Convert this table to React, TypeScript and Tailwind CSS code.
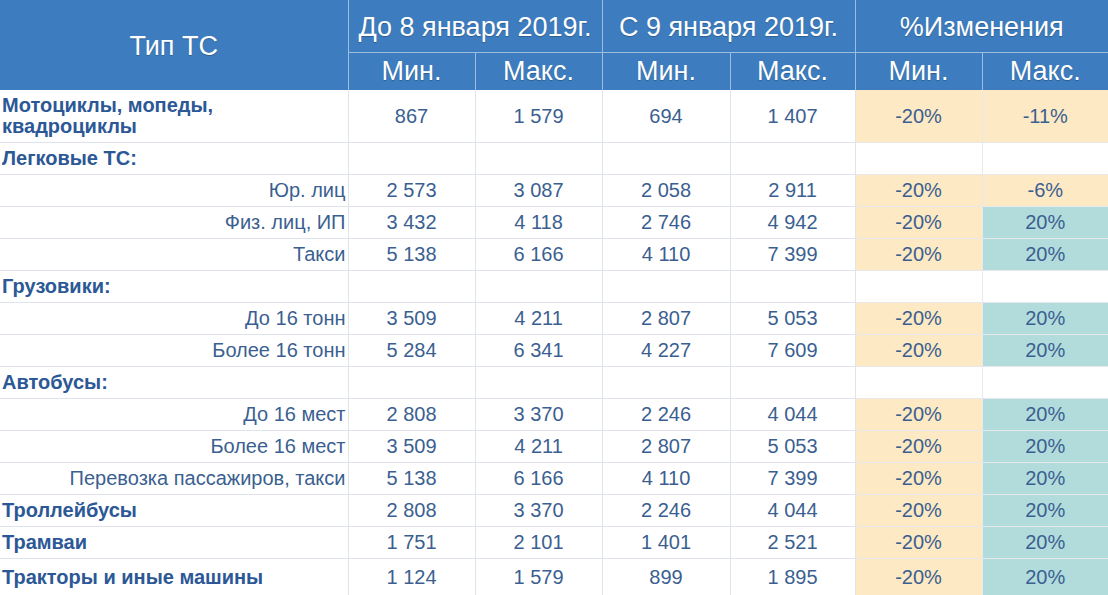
type Row = {
  label: string;
  kind: "main" | "group" | "sub";
  values?: string[];
  minPct?: string;
  maxPct?: string;
  tall?: boolean;
  last?: boolean;
};

const rows: Row[] = [
  { label: "Мотоциклы, мопеды, квадроциклы", kind: "main", values: ["867", "1 579", "694", "1 407"], minPct: "-20%", maxPct: "-11%", tall: true },
  { label: "Легковые ТС:", kind: "group" },
  { label: "Юр. лиц", kind: "sub", values: ["2 573", "3 087", "2 058", "2 911"], minPct: "-20%", maxPct: "-6%" },
  { label: "Физ. лиц, ИП", kind: "sub", values: ["3 432", "4 118", "2 746", "4 942"], minPct: "-20%", maxPct: "20%" },
  { label: "Такси", kind: "sub", values: ["5 138", "6 166", "4 110", "7 399"], minPct: "-20%", maxPct: "20%" },
  { label: "Грузовики:", kind: "group" },
  { label: "До 16 тонн", kind: "sub", values: ["3 509", "4 211", "2 807", "5 053"], minPct: "-20%", maxPct: "20%" },
  { label: "Более 16 тонн", kind: "sub", values: ["5 284", "6 341", "4 227", "7 609"], minPct: "-20%", maxPct: "20%" },
  { label: "Автобусы:", kind: "group" },
  { label: "До 16 мест", kind: "sub", values: ["2 808", "3 370", "2 246", "4 044"], minPct: "-20%", maxPct: "20%" },
  { label: "Более 16 мест", kind: "sub", values: ["3 509", "4 211", "2 807", "5 053"], minPct: "-20%", maxPct: "20%" },
  { label: "Перевозка пассажиров, такси", kind: "sub", values: ["5 138", "6 166", "4 110", "7 399"], minPct: "-20%", maxPct: "20%" },
  { label: "Троллейбусы", kind: "main", values: ["2 808", "3 370", "2 246", "4 044"], minPct: "-20%", maxPct: "20%" },
  { label: "Трамваи", kind: "main", values: ["1 751", "2 101", "1 401", "2 521"], minPct: "-20%", maxPct: "20%" },
  { label: "Тракторы и иные машины", kind: "main", values: ["1 124", "1 579", "899", "1 895"], minPct: "-20%", maxPct: "20%", last: true },
];

function pctBg(v?: string) {
  if (!v) return "bg-white";
  return v.startsWith("-") ? "bg-[#fde9c3]" : "bg-[#b2dcdc]";
}

export default function App() {
  return (
    <div className="w-[1108px] h-[595px] overflow-hidden bg-white font-['Liberation_Sans',Arial,sans-serif]">
      <table className="table-fixed border-collapse w-[1108px]">
        <colgroup>
          <col className="w-[348px]" />
          <col className="w-[127px]" />
          <col className="w-[127px]" />
          <col className="w-[128px]" />
          <col className="w-[125px]" />
          <col className="w-[127px]" />
          <col className="w-[126px]" />
        </colgroup>
        <thead className="bg-[#3d7dbf] text-white text-[27px] leading-[30px] [text-shadow:0_1px_1px_rgba(0,0,0,0.25)]">
          <tr className="h-[52px]">
            <th rowSpan={2} className="font-normal border-r border-[#9dbde0] pt-[2px]">Тип ТС</th>
            <th colSpan={2} className="font-normal border-r border-b border-[#9dbde0] pt-[2px] whitespace-nowrap">До 8 января 2019г.</th>
            <th colSpan={2} className="font-normal border-r border-b border-[#9dbde0] pt-[2px] whitespace-nowrap">С 9 января 2019г.</th>
            <th colSpan={2} className="font-normal border-b border-[#9dbde0] pt-[2px]">%Изменения</th>
          </tr>
          <tr className="h-[38px]">
            <th className="font-normal border-r border-[#9dbde0]">Мин.</th>
            <th className="font-normal border-r border-[#9dbde0]">Макс.</th>
            <th className="font-normal border-r border-[#9dbde0]">Мин.</th>
            <th className="font-normal border-r border-[#9dbde0]">Макс.</th>
            <th className="font-normal border-r border-[#9dbde0]">Мин.</th>
            <th className="font-normal">Макс.</th>
          </tr>
        </thead>
        <tbody className="text-[20px] text-[#3b5f90]">
          {rows.map((r, i) => (
            <tr key={i} className={r.tall ? "h-[52px]" : r.last ? "h-[38px]" : "h-[32px]"}>
              <td
                className={
                  r.kind === "sub"
                    ? "text-right pr-[2px] border-r border-b border-[#dfe4ec] leading-[22px] whitespace-nowrap"
                    : "text-left pl-[2px] font-bold text-[#2c5896] border-b border-r border-[#dfe4ec] leading-[21px]"
                }
              >
                {r.label}
              </td>
              {[0, 1, 2, 3].map((j) => (
                <td key={j} className="text-center border-r border-b border-[#dfe4ec]">
                  {r.values ? r.values[j] : ""}
                </td>
              ))}
              <td className={`text-center border-r border-b border-[#e6e8ec] ${pctBg(r.minPct)}`}>{r.minPct ?? ""}</td>
              <td className={`text-center border-b border-[#e6e8ec] ${pctBg(r.maxPct)}`}>{r.maxPct ?? ""}</td>
            </tr>
          ))}
        </tbody>
      </table>
    </div>
  );
}
